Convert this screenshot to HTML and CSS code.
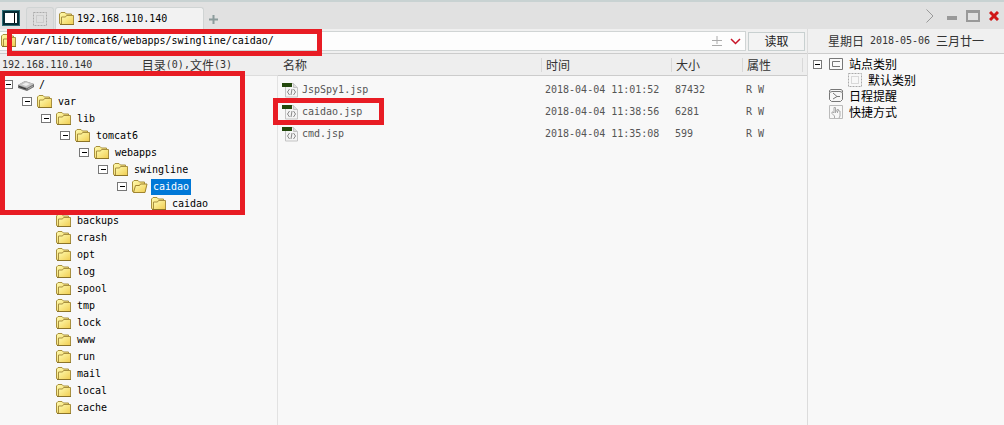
FILE: index.html
```
<!DOCTYPE html>
<html lang="zh-CN">
<head>
    <meta charset="UTF-8">
    <title>192.168.110.140</title>
    <meta name="viewport" content="width=device-width, initial-scale=1.0">
    <link rel="stylesheet" href="styles.css">
</head>
<body>
    <!-- icon sprite -->
    <svg class="sprite" aria-hidden="true">
        <linearGradient id="gold" x1="0" y1="0" x2="1" y2="1">
            <stop offset="0" stop-color="#fffcb0"/>
            <stop offset="1" stop-color="#f0cc50"/>
        </linearGradient>
        <symbol id="folder" viewBox="0 0 16 16">
            <path d="M.5 12.500V3L2 1.500h4L7.500 3h5v10h-11z" fill="url(#gold)" stroke="#a8903c"/>
            <path d="M2.500 13.500V6h4L7.500 4.500h7v9z" fill="url(#gold)" stroke="#a89040"/>
            <path d="M1 13.500h14" stroke="#8c7428"/>
        </symbol>
        <symbol id="folder-open" viewBox="0 0 16 16">
            <path d="M.5 12.500V3L2 1.500h4L7.500 3h5v10h-11z" fill="url(#gold)" stroke="#a8903c"/>
            <path d="M1.500 13.500L3.500 6.500h4l1-1.500h6.500L13 13.500z" fill="url(#gold)" stroke="#a08430"/>
        </symbol>
        <symbol id="drive" viewBox="0 0 16 16">
            <path d="M0 8l7-4 9 3v3l-7 4-9-3z" fill="#707070"/>
            <path d="M0 8l7-4 9 3-7 4z" fill="#c4c4c4"/>
            <path d="M4 7.500l4-2 4 1.500-4 2z" fill="#eee"/>
            <path d="M1 9.500l7 2.500" stroke="#333"/>
            <path d="M10 12l5-3" stroke="#aaa"/>
        </symbol>
        <symbol id="jsp" viewBox="0 0 16 16">
            <path d="M3.500 1.500h8l4 4v9.500h-12z" fill="#f4f4f4" stroke="#c4c4c4"/>
            <path d="M11.500 1.500v4h4" fill="#ddd" stroke="#c4c4c4"/>
            <path d="M0 1h10v4H0z" fill="#23480c"/>
            <path d="M7.500 7L5.500 10l2 3M11.500 7l2 3-2 3M10 7l-1 6" fill="none" stroke="#888"/>
        </symbol>
        <symbol id="dashed" viewBox="0 0 14 14">
            <path d="M.5.5h13v13H.5z" fill="none" stroke="#aaa" stroke-dasharray="2 1"/>
            <path d="M3.500 3.500h7v7h-7z" fill="none" stroke="#bbb" stroke-dasharray="1 1"/>
        </symbol>
        <symbol id="sites" viewBox="0 0 14 14">
            <path d="M.5 1.500h13v11H.5z" fill="#fafafa" stroke="#777"/>
            <path d="M11 4.500H3.500v5H11" fill="none" stroke="#777"/>
        </symbol>
        <symbol id="clock" viewBox="0 0 14 14">
            <path d="M.5 3V1.500L2 .5h10l1.500 1V3M.5 3.500L3 2.500h8l2.500 1v7l-2 2h-9l-2-2z" fill="#f6f6f6" stroke="#777"/>
            <path d="M4 4l4 3.500L4 10M8 7.500h3" fill="none" stroke="#777"/>
        </symbol>
        <symbol id="hand" viewBox="0 0 14 14">
            <path d="M.5.5h13v13H.5z" fill="#f8f8f8" stroke="#bbb"/>
            <path d="M5.500 13v-2L3 8.500V7h1l1 1V2.500h1.500V6h1.500V4.500h1.500V6H11v5l-1 2M6.500 6v2M8.500 6v2" fill="none" stroke="#aaa"/>
        </symbol>
    </svg>

    <header class="titlebar">
        <button class="home" title="Home"><span></span></button>
        <button class="tab blank" title="默认类别"><svg class="small"><use href="#dashed"/></svg></button>
        <button class="tab active"><svg class="icon"><use href="#folder"/></svg>192.168.110.140</button>
        <button class="add" title="New tab"><svg width="9" height="9"><path d="M4.500 0v9M0 4.500h9" stroke="#8c9c9c" stroke-width="2"/></svg></button>
        <div class="controls">
            <button title="Next"><svg width="8" height="14"><path d="M.5.5l6.500 6.500-6.500 6.500" fill="none" stroke="#999"/></svg></button>
            <button title="Minimize"><svg width="10" height="14"><path d="M0 9h10" stroke="#999" stroke-width="4"/></svg></button>
            <button title="Maximize"><svg width="14" height="12"><path d="M1 1v10h12V1" fill="none" stroke="#999" stroke-width="2"/><path d="M0 1.500h14" stroke="#999" stroke-width="3"/></svg></button>
            <button title="Close"><svg width="10" height="10"><path d="M1 1l8 8M9 1L1 9" stroke="#d01818" stroke-width="3"/></svg></button>
        </div>
    </header>

    <div class="main">
        <div class="workspace">
            <form class="address">
                <div class="field">
                    <svg class="icon"><use href="#folder"/></svg>
                    <input type="text" aria-label="路径" value="/var/lib/tomcat6/webapps/swingline/caidao/">
                    <svg width="10" height="11"><path d="M5 0v8M0 4.500h10M0 9.500h10" fill="none" stroke="#aaa"/></svg>
                    <svg width="11" height="7"><path d="M1 1l4.500 4.500L10 1" fill="none" stroke="#c81428" stroke-width="1.500"/></svg>
                </div>
                <button type="button" class="read">读取</button>
                <div class="mark mark-path"></div>
            </form>

            <div class="panes">
                <section class="tree">
                    <div class="head">
                        <span>192.168.110.140</span>
                        <span class="count"><b>目录</b>(0),<b>文件</b>(3)</span>
                    </div>
                    <ul>
                        <li>
                            <div class="node"><button class="fold" aria-label="/"></button><svg class="icon"><use href="#drive"/></svg><span>/</span></div>
                            <ul>
                                <li>
                                    <div class="node"><button class="fold" aria-label="var"></button><svg class="icon"><use href="#folder"/></svg><span>var</span></div>
                                    <ul>
                                        <li>
                                            <div class="node"><button class="fold" aria-label="lib"></button><svg class="icon"><use href="#folder"/></svg><span>lib</span></div>
                                            <ul>
                                                <li>
                                                    <div class="node"><button class="fold" aria-label="tomcat6"></button><svg class="icon"><use href="#folder"/></svg><span>tomcat6</span></div>
                                                    <ul>
                                                        <li>
                                                            <div class="node"><button class="fold" aria-label="webapps"></button><svg class="icon"><use href="#folder"/></svg><span>webapps</span></div>
                                                            <ul>
                                                                <li>
                                                                    <div class="node"><button class="fold" aria-label="swingline"></button><svg class="icon"><use href="#folder"/></svg><span>swingline</span></div>
                                                                    <ul>
                                                                        <li>
                                                                            <div class="node selected"><button class="fold" aria-label="caidao"></button><svg class="icon"><use href="#folder-open"/></svg><span>caidao</span></div>
                                                                            <ul>
                                                                                <li><div class="node leaf"><svg class="icon"><use href="#folder"/></svg><span>caidao</span></div></li>
                                                                            </ul>
                                                                        </li>
                                                                    </ul>
                                                                </li>
                                                            </ul>
                                                        </li>
                                                    </ul>
                                                </li>
                                            </ul>
                                        </li>
                                        <li><div class="node leaf"><svg class="icon"><use href="#folder"/></svg><span>backups</span></div></li>
                                        <li><div class="node leaf"><svg class="icon"><use href="#folder"/></svg><span>crash</span></div></li>
                                        <li><div class="node leaf"><svg class="icon"><use href="#folder"/></svg><span>opt</span></div></li>
                                        <li><div class="node leaf"><svg class="icon"><use href="#folder"/></svg><span>log</span></div></li>
                                        <li><div class="node leaf"><svg class="icon"><use href="#folder"/></svg><span>spool</span></div></li>
                                        <li><div class="node leaf"><svg class="icon"><use href="#folder"/></svg><span>tmp</span></div></li>
                                        <li><div class="node leaf"><svg class="icon"><use href="#folder"/></svg><span>lock</span></div></li>
                                        <li><div class="node leaf"><svg class="icon"><use href="#folder"/></svg><span>www</span></div></li>
                                        <li><div class="node leaf"><svg class="icon"><use href="#folder"/></svg><span>run</span></div></li>
                                        <li><div class="node leaf"><svg class="icon"><use href="#folder"/></svg><span>mail</span></div></li>
                                        <li><div class="node leaf"><svg class="icon"><use href="#folder"/></svg><span>local</span></div></li>
                                        <li><div class="node leaf"><svg class="icon"><use href="#folder"/></svg><span>cache</span></div></li>
                                    </ul>
                                </li>
                            </ul>
                        </li>
                    </ul>
                    <div class="mark mark-tree"></div>
                </section>

                <section class="files">
                    <table>
                        <thead>
                            <tr><th>名称</th><th class="time">时间</th><th class="size">大小</th><th class="attr">属性</th><th class="end"></th></tr>
                        </thead>
                        <tbody>
                            <tr><td><svg class="icon"><use href="#jsp"/></svg>JspSpy1.jsp</td><td>2018-04-04 11:01:52</td><td>87432</td><td>R W</td><td></td></tr>
                            <tr><td><svg class="icon"><use href="#jsp"/></svg>caidao.jsp</td><td>2018-04-04 11:38:56</td><td>6281</td><td>R W</td><td></td></tr>
                            <tr><td><svg class="icon"><use href="#jsp"/></svg>cmd.jsp</td><td>2018-04-04 11:35:08</td><td>599</td><td>R W</td><td></td></tr>
                        </tbody>
                    </table>
                    <div class="mark mark-file"></div>
                </section>
            </div>
        </div>

        <aside>
            <div class="date"><b>星期日</b> 2018-05-06 <b>三月廿一</b></div>
            <ul>
                <li>
                    <div class="item"><button class="fold" aria-label="站点类别"></button><svg class="small"><use href="#sites"/></svg><b>站点类别</b></div>
                    <ul>
                        <li><div class="item leaf"><svg class="small"><use href="#dashed"/></svg><b>默认类别</b></div></li>
                    </ul>
                </li>
                <li><div class="item leaf"><svg class="small"><use href="#clock"/></svg><b>日程提醒</b></div></li>
                <li><div class="item leaf"><svg class="small"><use href="#hand"/></svg><b>快捷方式</b></div></li>
            </ul>
        </aside>
    </div>
</body>
</html>
```
FILE: styles.css
```
* {
    box-sizing: border-box;
    margin: 0;
    padding: 0;
}
body {
    display: flex;
    flex-direction: column;
    min-height: 100vh;
    background: #f8f8f8;
    color: #000;
    font: 10px/16px "DejaVu Sans Mono", "Noto Sans CJK SC", monospace;
}
button, input {
    border: 0;
    background: none;
    color: inherit;
    font: inherit;
}
ul {
    list-style: none;
}
svg {
    display: block;
    flex: none;
}
/* chinese text */
b, th, .read {
    font: 12px/16px "Noto Sans CJK SC", sans-serif;
}
.sprite {
    position: absolute;
    width: 0;
    height: 0;
}
.icon {
    width: 16px;
    height: 16px;
}
.small {
    width: 14px;
    height: 14px;
}

/* title bar */
.titlebar {
    display: flex;
    align-items: flex-end;
    height: 29px;
    padding-left: 2px;
    border-top: 2px solid #c8d2d2;
    background: #e1e1e1;
}
.home {
    width: 18px;
    height: 16px;
    margin-bottom: 3px;
    padding: 2px;
    border: 1px solid #2d6d75;
    background: #062c34;
}
.home span {
    display: block;
    height: 10px;
    border-right: 2px solid #fff;
    background: linear-gradient(90deg, #fff 9px, #000 9px);
}
.tab {
    display: flex;
    align-items: center;
    height: 22px;
    border: 1px solid #d0d4d4;
    border-bottom: 0;
    border-radius: 3px 3px 0 0;
}
.tab.blank {
    width: 28px;
    margin: 0 1px 0 6px;
    justify-content: center;
    background: #dedede;
}
.tab.active {
    width: 149px;
    gap: 2px;
    padding-left: 3px;
    background: #f2f2f2;
}
.add {
    margin: 0 0 5px 5px;
}
.controls {
    display: flex;
    align-items: center;
    gap: 9px;
    height: 27px;
    margin-left: auto;
    padding-right: 5px;
}
.controls button:first-child {
    margin-right: 4px;
}

.main {
    display: flex;
    flex: 1;
}
.workspace {
    display: flex;
    flex: 1;
    flex-direction: column;
    border-right: 1px solid #dcdcdc;
}

/* address bar */
.address {
    position: relative;
    z-index: 1;
    display: flex;
    gap: 2px;
    align-items: center;
    height: 25px;
    padding-right: 2px;
    border-bottom: 1px solid #ccc;
    background: #f0f0f0;
}
.field {
    display: flex;
    flex: 1;
    align-items: center;
    gap: 8px;
    height: 20px;
    padding: 0 4px 0 1px;
    border: 1px solid #d0d4d4;
    border-left: 0;
    background: #fdfdfd;
}
.field input {
    flex: 1;
    margin-left: -4px;
    outline: 0;
}
.read {
    width: 57px;
    height: 19px;
    border: 1px solid #c8d0d0;
    background: #f3f3f3;
    color: #222;
}

.panes {
    display: flex;
    flex: 1;
}

/* directory tree */
.tree {
    position: relative;
    width: 278px;
    border-right: 1px solid #e2e2e2;
}
.head {
    display: flex;
    align-items: center;
    height: 22px;
    margin-right: -1px;
    padding: 0 2px;
    border-bottom: 1px solid #ddd;
    background: #eee;
    color: #333;
}
.count, .date {
    display: flex;
    align-items: center;
}
.count {
    margin-left: auto;
    padding-right: 44px;
}
.tree > ul {
    padding-left: 3px;
}
.tree ul ul {
    padding-left: 19px;
}
.node {
    display: flex;
    align-items: center;
    height: 17px;
}
.node span {
    margin-left: 3px;
    padding: 0 2px;
}
.node.leaf {
    padding-left: 15px;
}
.node.selected span {
    background: #0078d7;
    color: #fff;
}
.fold {
    flex: none;
    width: 9px;
    height: 9px;
    margin-right: 6px;
    border: 1px solid #777;
    background: linear-gradient(#000, #000) center / 5px 1px no-repeat #fff;
}
.tree .fold {
    width: 10px;
    margin-right: 5px;
}

/* file list */
.files {
    position: relative;
    flex: 1;
}
table {
    width: 100%;
    border-collapse: separate;
    border-spacing: 0;
    table-layout: fixed;
    color: #555;
}
th {
    height: 22px;
    padding-left: 5px;
    border-bottom: 1px solid #ccc;
    background: linear-gradient(#d8d8d8, #d8d8d8) left center / 1px 14px no-repeat #eee;
    color: #333;
    text-align: left;
}
th:first-child {
    background: #eee;
}
.time {
    width: 130px;
}
.size {
    width: 71px;
}
.attr {
    width: 60px;
}
.end {
    width: 5px;
    padding: 0;
}
td {
    height: 22px;
    padding-left: 4px;
}
td .icon {
    display: inline-block;
    margin-right: 4px;
    vertical-align: middle;
}
tbody::before {
    content: "";
    display: block;
    height: 3px;
}

/* side panel */
aside {
    width: 196px;
}
.date {
    justify-content: center;
    gap: 6px;
    height: 25px;
    border-bottom: 1px solid #ccc;
    background: #f0f0f0;
    color: #333;
}
aside > ul {
    padding: 2px 0 0 5px;
}
aside ul ul {
    padding-left: 19px;
}
.item {
    display: flex;
    align-items: center;
    height: 16px;
}
.item b {
    margin-left: 6px;
}
.item.leaf {
    padding-left: 16px;
}
aside .fold {
    margin-right: 7px;
}

/* red highlights */
.mark {
    position: absolute;
    border: 5px solid #e81c24;
    pointer-events: none;
}
.mark-path {
    top: 0;
    left: 7px;
    width: 315px;
    height: 27px;
}
.mark-tree {
    top: 17px;
    left: 0;
    width: 245px;
    height: 144px;
}
.mark-file {
    top: 44px;
    left: -5px;
    width: 111px;
    height: 27px;
}
```
